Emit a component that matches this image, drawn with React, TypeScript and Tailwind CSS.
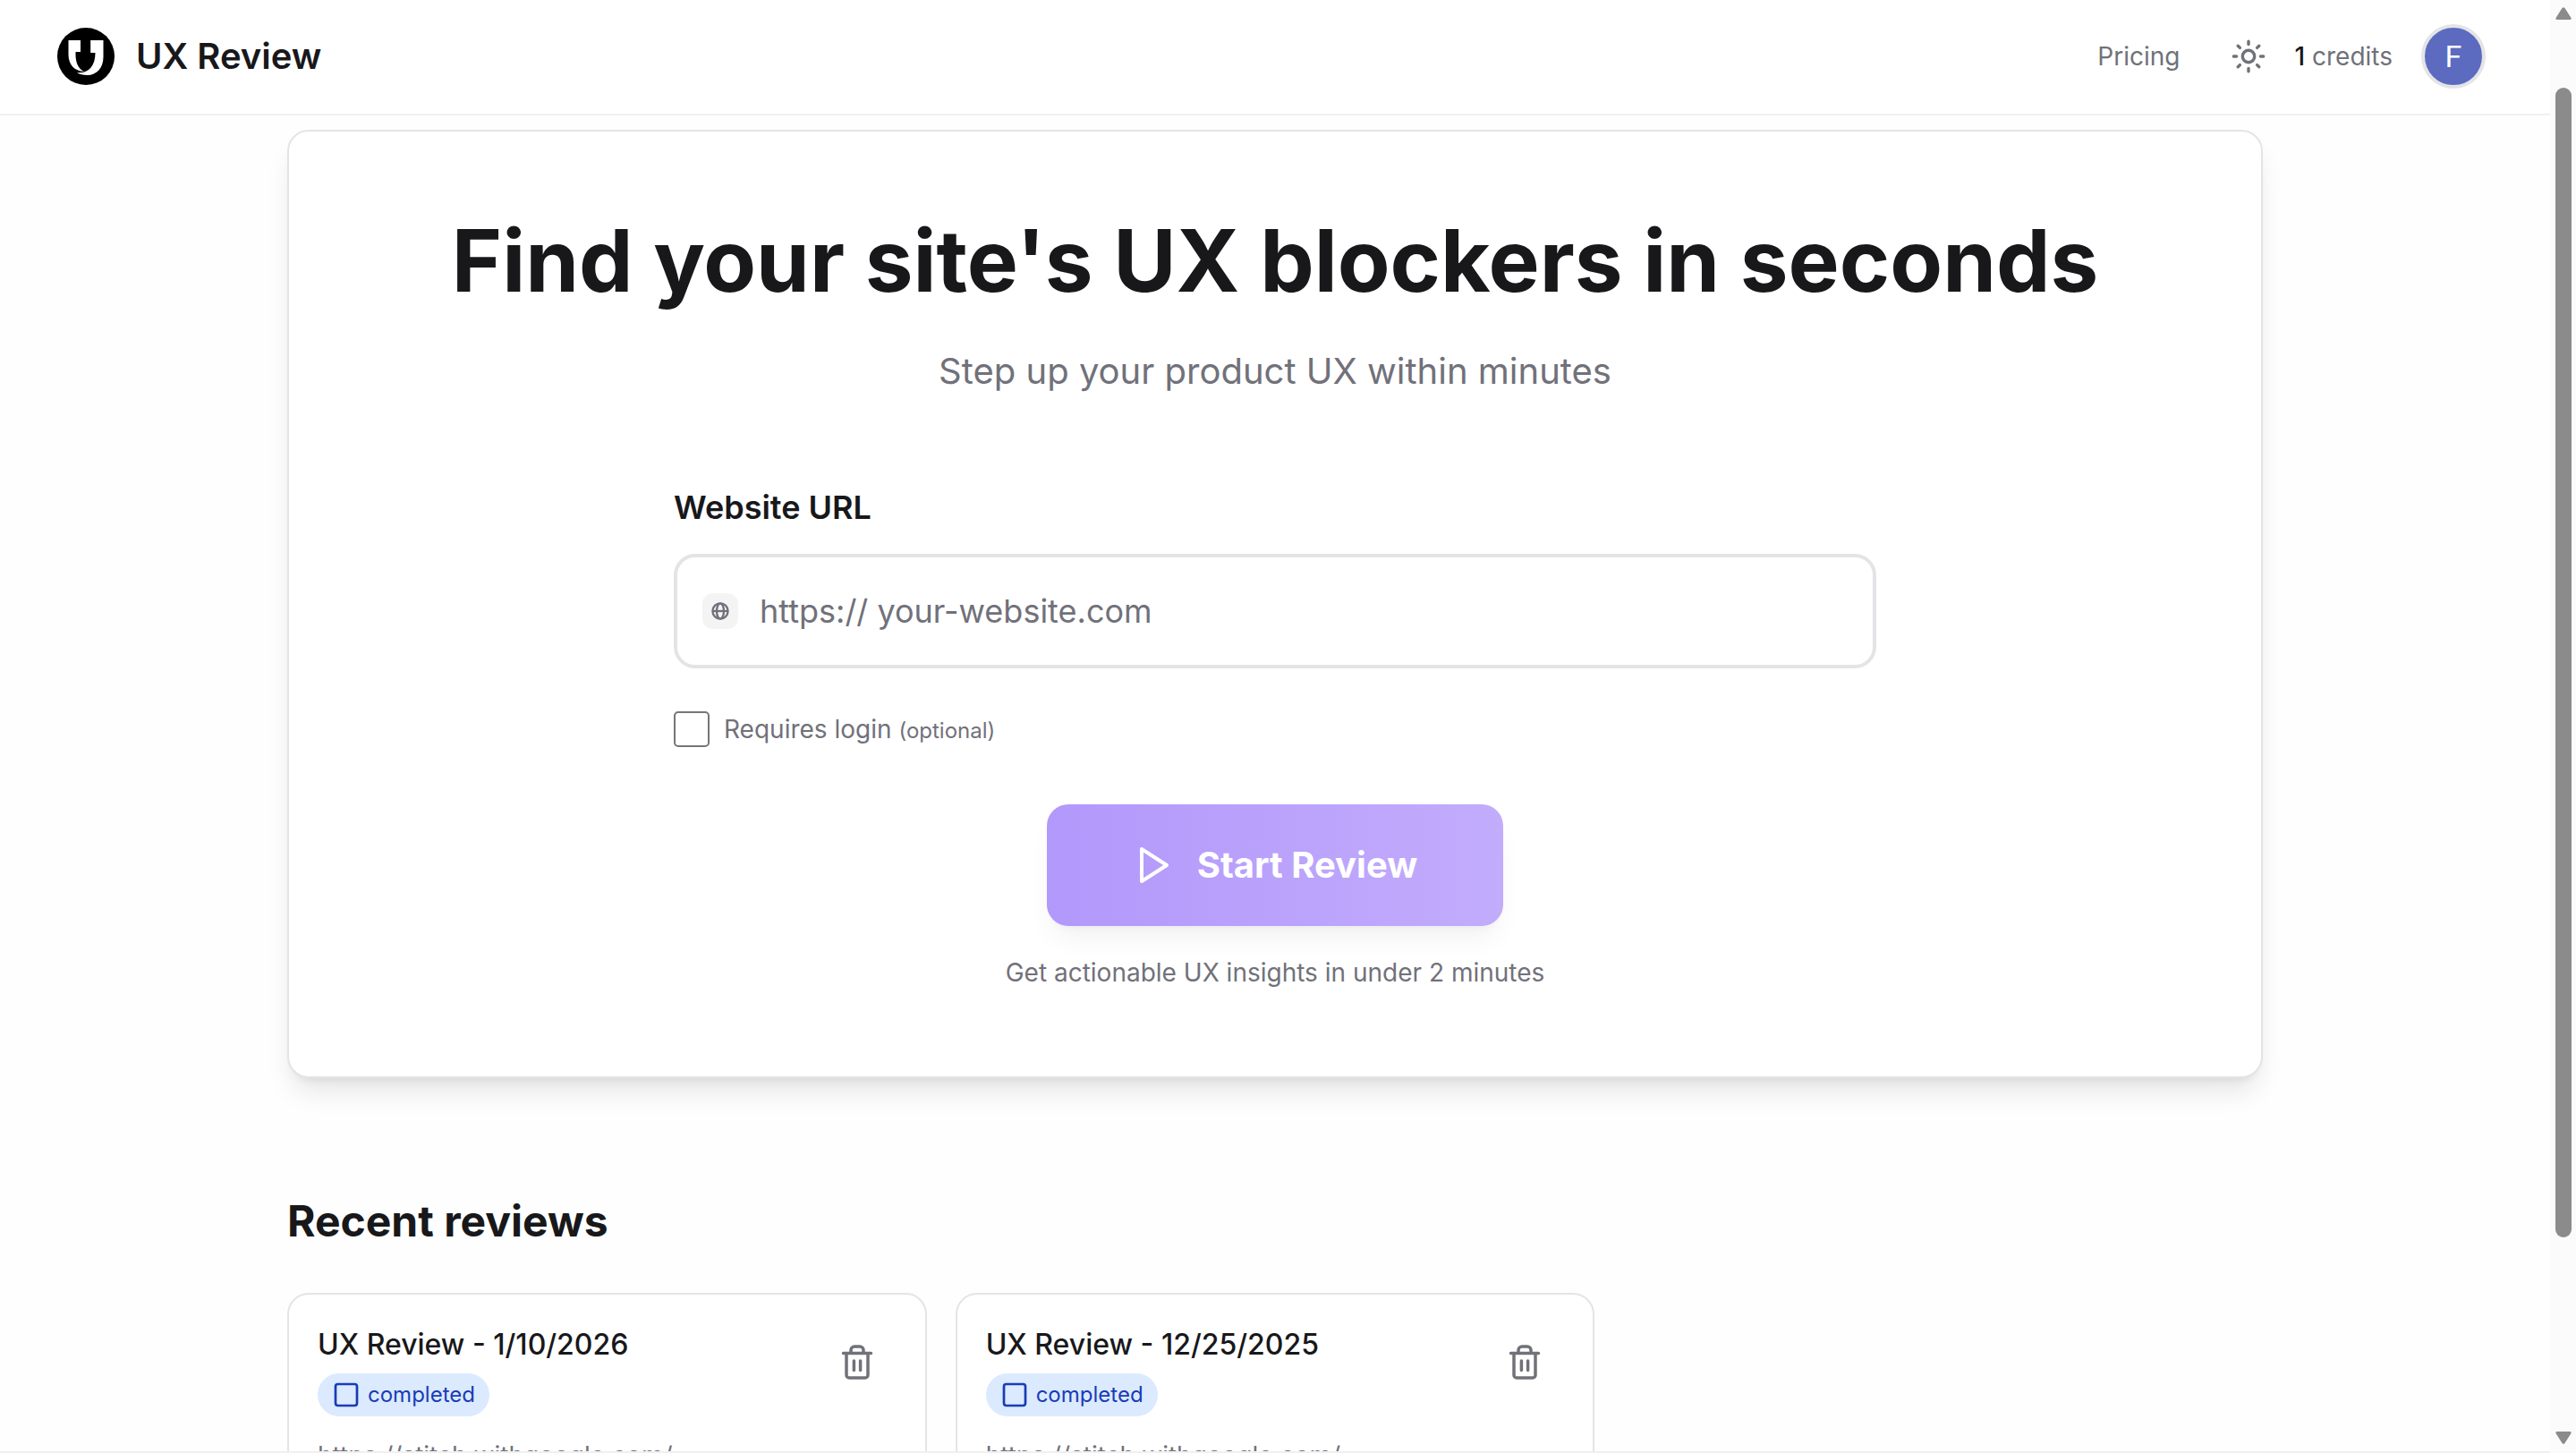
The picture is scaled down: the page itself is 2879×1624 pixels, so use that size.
import { useState } from 'react';

interface Review {
  id: number;
  title: string;
  status: string;
  url: string;
}

const reviews: Review[] = [
  { id: 1, title: 'UX Review - 1/10/2026', status: 'completed', url: 'https://stitch.withgoogle.com/' },
  { id: 2, title: 'UX Review - 12/25/2025', status: 'completed', url: 'https://stitch.withgoogle.com/' },
];

function Logo() {
  return (
    <svg viewBox="0 0 64 64" className="size-16" aria-hidden="true">
      <circle cx="32" cy="32" r="32" fill="#000" />
      <path fill="#fff" d="M12.500 14H26v13h-5.500v3c0 9 3 16 9.500 19-11-.5-17.500-8-17.500-19z" />
      <path fill="#fff" d="M37.200 14h14.300v18.500C51.500 45 44 53 33.500 53c-4.500 0-8.500-1-11.500-2.800 12.500 1.300 20.500-7 20.500-22.200h-5.300z" />
    </svg>
  );
}

function SunIcon() {
  return (
    <svg viewBox="0 0 40 40" className="size-10" fill="none" stroke="currentColor" strokeWidth="3.400" strokeLinecap="round" aria-hidden="true">
      <circle cx="20" cy="20" r="6.700" />
      <path d="M20 3.300v3.300M20 33.400v3.300M3.300 20h3.300M33.400 20h3.300M8.200 8.200l2.200 2.200M29.600 29.600l2.200 2.200M8.200 31.800l2.200-2.200M29.600 10.400l2.200-2.200" />
    </svg>
  );
}

function GlobeIcon() {
  return (
    <svg viewBox="0 0 20 20" className="size-5" fill="none" stroke="currentColor" strokeWidth="2.300" aria-hidden="true">
      <circle cx="10" cy="10" r="8.600" />
      <ellipse cx="10" cy="10" rx="4" ry="8.600" />
      <path d="M1.300 10h17.400" />
    </svg>
  );
}

function PlayIcon() {
  return (
    <svg viewBox="0 0 44 40" className="h-10 w-11" fill="none" stroke="currentColor" strokeWidth="4" strokeLinejoin="round" aria-hidden="true">
      <path d="M10 2v36L38 20z" />
    </svg>
  );
}

function TrashIcon() {
  return (
    <svg viewBox="0 0 40 40" className="size-10" fill="none" stroke="currentColor" strokeWidth="3.500" strokeLinecap="round" strokeLinejoin="round" aria-hidden="true">
      <path d="M4.500 9.500h31M8 9.500V34a3 3 0 0 0 3 3h18a3 3 0 0 0 3-3V9.500M13 9V6a4 4 0 0 1 4-4h6a4 4 0 0 1 4 4v3M16.400 18v10.500M23.600 18v10.500" />
    </svg>
  );
}

function ReviewCard({ review }: { review: Review }) {
  return (
    <article className="rounded-3xl border-2 border-[#e4e4e7] bg-white p-8">
      <div className="flex items-start justify-between">
        <div className="flex flex-col items-start gap-2">
          <h3 className="text-[32px] leading-12 font-medium">{review.title}</h3>
          <span className="flex h-12 items-center gap-2 rounded-full bg-blue-100 px-4 text-2xl text-blue-800">
            <svg viewBox="0 0 32 32" className="size-8" fill="none" stroke="currentColor" strokeWidth="2.700" aria-hidden="true">
              <rect x="4" y="4" width="24" height="24" rx="2.700" />
            </svg>
            {review.status}
          </span>
        </div>
        <button type="button" aria-label="Delete review" className="p-6 text-[#71717a]">
          <TrashIcon />
        </button>
      </div>
      <p className="mt-6 text-[28px] leading-10 text-[#71717a]">{review.url}</p>
    </article>
  );
}

// Vertical scrollbar with rounded thumb
function Scrollbar() {
  return (
    <div className="flex h-full w-[29px] shrink-0 flex-col items-center justify-between bg-[#fbfbfb] pt-2 pb-[10px]" aria-hidden="true">
      <svg viewBox="0 0 18 14" className="h-[14px] w-[18px]" fill="#8b8b8b">
        <path d="M7.500 1a2 2 0 0 1 3 0l7 11a1.500 1.500 0 0 1-1 2h-15a1.500 1.500 0 0 1-1-2z" />
      </svg>
      <div className="flex w-[18px] flex-1 flex-col pt-[76px] pb-[217px]">
        <div className="flex-1 rounded-full bg-[#8b8b8b]" />
      </div>
      <svg viewBox="0 0 18 14" className="h-[14px] w-[18px]" fill="#8b8b8b">
        <path d="M7.500 13a2 2 0 0 0 3 0l7-11a1.500 1.500 0 0 0-1-2h-15a1.500 1.500 0 0 0-1 2z" />
      </svg>
    </div>
  );
}

export default function App() {
  const [url, setUrl] = useState('');
  const [requiresLogin, setRequiresLogin] = useState(false);

  return (
    <div className="flex h-screen overflow-hidden bg-[#fefefe] font-['Inter',sans-serif] text-[#18181b]">
      <div className="flex min-w-0 flex-1 flex-col overflow-hidden border-b-2 border-[#f0f0f3]">
        <header className="flex h-[129px] shrink-0 items-center justify-between border-b-2 border-[#f1f1f2] bg-white pr-[72px] pb-px pl-16">
          <a href="#" className="flex items-center gap-6 text-[40px] leading-14 font-semibold">
            <Logo />
            UX Review
          </a>
          <nav className="flex items-center text-[28px] leading-10 text-[#71717a]">
            <a href="#pricing" className="mr-14">Pricing</a>
            <button type="button" aria-label="Toggle theme" className="mr-8">
              <SunIcon />
            </button>
            <span className="mr-8">
              <span className="font-medium text-[#18181b]">1</span> credits
            </span>
            <button type="button" className="flex size-[72px] items-center justify-center rounded-full border-4 border-[#e4e4e7] bg-[#5c6bc0] font-['Roboto',sans-serif] text-[34px] text-white">
              F
            </button>
          </nav>
        </header>

        <main className="mx-auto w-full max-w-[2304px] px-12 pt-4">
          <section className="flex flex-col items-center rounded-3xl border-2 border-[#e4e4e7] bg-white px-12 py-24 shadow-[0_20px_30px_-6px_rgb(0_0_0/0.1),0_8px_12px_-8px_rgb(0_0_0/0.1)]">
            <h1 className="text-[96px] leading-24 font-bold">Find your site's UX blockers in seconds</h1>
            <p className="mt-12 text-[40px] leading-14 text-[#71717a]">Step up your product UX within minutes</p>

            <form className="mt-24 flex w-full max-w-[1344px] flex-col" onSubmit={e => e.preventDefault()}>
              <label htmlFor="url" className="text-4xl leading-14 font-semibold">Website URL</label>
              <div className="mt-6 flex h-32 items-center gap-6 rounded-3xl border-4 border-[#e4e4e7] bg-white px-7">
                <span className="flex size-10 items-center justify-center rounded-xl bg-[#f4f4f5] text-[#71717a]">
                  <GlobeIcon />
                </span>
                <input
                  id="url"
                  type="text"
                  value={url}
                  onChange={e => setUrl(e.target.value)}
                  placeholder="https:// your-website.com"
                  className="h-full flex-1 text-4xl outline-none placeholder:text-[#71717a]"
                />
              </div>
              <label className="mt-12 flex items-center gap-4 text-[28px] leading-10 text-[#71717a]">
                <input
                  type="checkbox"
                  checked={requiresLogin}
                  onChange={e => setRequiresLogin(e.target.checked)}
                  className="size-10 appearance-none rounded-[5px] border-2 border-[#767676] bg-white checked:bg-violet-500"
                />
                <span>
                  Requires login <span className="text-2xl">(optional)</span>
                </span>
              </label>
              <button
                type="submit"
                className="mt-16 flex h-[136px] w-[510px] items-center justify-center gap-7 self-center rounded-3xl bg-linear-to-r from-[#b298fb] to-[#c2acfc] text-[40px] font-bold text-white shadow-[0_20px_30px_-6px_rgb(0_0_0/0.05),0_8px_12px_-8px_rgb(0_0_0/0.05)]"
              >
                <PlayIcon />
                Start Review
              </button>
              <p className="mt-8 text-center text-[28px] leading-10 text-[#71717a]">Get actionable UX insights in under 2 minutes</p>
            </form>
          </section>

          <h2 className="mt-32 text-5xl leading-16 font-bold">Recent reviews</h2>
          <div className="mt-12 grid grid-cols-3 gap-8">
            {reviews.map(review => (
              <ReviewCard key={review.id} review={review} />
            ))}
          </div>
        </main>
      </div>
      <Scrollbar />
    </div>
  );
}
